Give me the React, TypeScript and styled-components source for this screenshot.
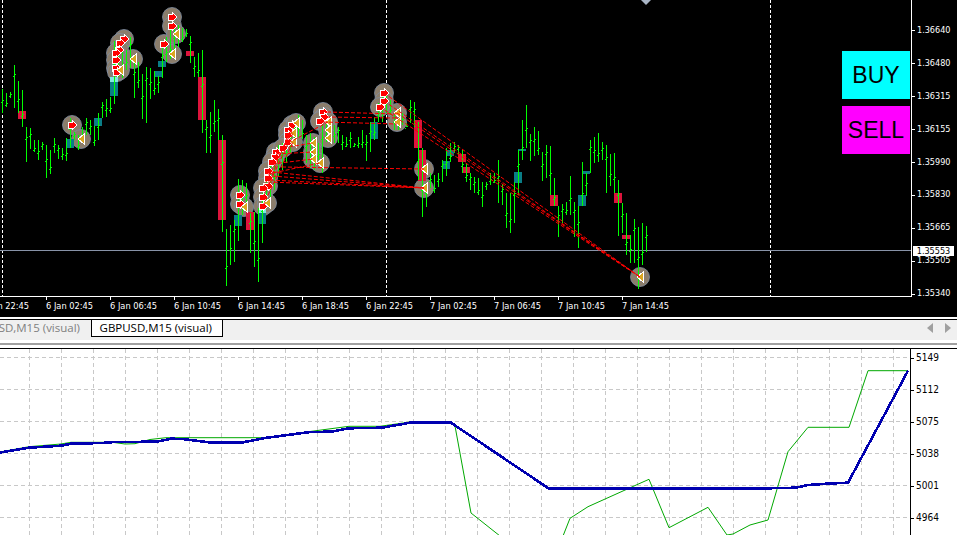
import * as React from 'react';
import styled, { createGlobalStyle } from 'styled-components';

// x = 2 + 4 * index, values are [high y, low y]
const BARS: [number, number][] = [
    [89,113],[93,107],[92,98],[65,108],[81,113],[90,127],[127,162],[128,149],[140,152],[140,160],
    [142,150],[145,178],[150,174],[138,153],[145,159],[148,160],[138,161],[118,148],[132,140],[135,150],
    [127,143],[118,135],[120,135],[126,146],[113,140],[102,118],[99,117],[97,113],[41,104],[55,77],
    [52,78],[50,70],[37,68],[58,98],[62,88],[74,119],[67,123],[68,99],[71,95],[76,93],
    [48,78],[37,62],[30,59],[28,59],[25,47],[28,42],[29,37],[36,63],[57,77],[53,77],
    [50,133],[120,153],[112,153],[100,132],[109,140],[135,232],[229,286],[225,265],[220,262],[179,241],
    [180,215],[183,210],[213,253],[212,267],[208,282],[193,243],[177,207],[163,200],[153,190],[145,177],
    [143,170],[128,163],[122,153],[123,143],[115,137],[120,139],[135,163],[133,167],[137,170],[143,160],
    [125,173],[122,142],[120,143],[125,143],[127,143],[135,150],[137,147],[132,148],[143,147],[137,148],
    [130,148],[135,161],[122,152],[117,140],[103,122],[95,122],[95,113],[100,115],[113,130],[118,130],
    [113,125],[123,127],[100,123],[102,127],[122,180],[148,217],[187,207],[173,188],[175,193],[173,187],
    [160,182],[148,176],[143,162],[142,153],[145,155],[150,173],[163,182],[173,190],[177,193],[178,195],
    [182,207],[182,190],[173,185],[173,183],[160,203],[184,205],[193,228],[193,233],[182,223],[150,195],
    [120,160],[105,148],[134,161],[127,156],[131,155],[152,181],[145,178],[146,195],[178,206],[206,237],
    [204,223],[202,215],[176,215],[202,237],[206,248],[162,206],[173,196],[140,173],[137,163],[133,162],
    [142,160],[145,193],[154,186],[153,193],[180,236],[203,233],[213,255],[235,263],[219,263],[227,289],
    [223,265],[226,252],
];

// x, top, width, height
const RED_BODIES = [
    [18,111,8,8],[186,51,8,5],[198,77,8,43],[218,140,8,80],[246,212,8,18],[414,120,8,28],[418,150,8,31],
    [458,154,8,8],[462,167,8,6],[550,195,8,11],[614,193,8,10],[622,235,8,4],
];
const TEAL_BODIES = [
    [66,139,8,9],[94,118,8,8],[110,82,8,14],[154,71,8,6],[158,61,8,6],[234,215,8,11],[258,213,8,11],
    [370,122,8,17],[442,161,8,8],[446,150,8,6],[514,172,8,11],[518,149,8,2],[578,195,8,11],[582,171,8,3],
];
const PALE_BODIES = [[110,77,8,5],[258,208,8,5]];

const ARROWS = [
    [72,125],[124,39],[120,43],[119,50],[116,53],[116,60],[116,68],[117,72],[172,17],[172,26],[164,44],
    [240,195],[240,204],[276,152],[275,157],[272,162],[268,171],[268,178],[268,186],[263,188],[263,197],[263,206],
    [292,125],[288,130],[288,135],[288,142],[283,148],[323,112],[324,117],[320,121],[384,93],[384,101],[380,107],
];
const TRIANGLES = [
    [81,139],[133,59],[120,70],[176,34],[172,54],[244,207],[267,203],[296,123],[293,133],[293,142],
    [313,143],[313,152],[313,159],[320,163],[328,122],[328,130],[328,138],[397,113],[397,122],[424,169],[424,188],[640,277],
];
const TRADE_LINES = [
    [327,112,397,114],[326,117,397,118],[323,122,397,124],
    [282,167,424,169],[272,172,424,188],[272,176,424,188],[270,180,424,188],[268,182,424,188],
    [288,143,328,122],[283,148,313,143],[276,154,313,152],[272,164,313,159],[268,174,320,163],
    [263,188,296,123],[263,197,293,133],[263,206,293,142],[268,186,288,135],
    [384,93,640,277],[384,101,640,277],[380,107,640,277],[397,113,640,277],
];

const PRICES = ['1.36640','1.36480','1.36315','1.36155','1.35990','1.35830','1.35665','1.35505','1.35340'];
const TIMES = [
    '5 Jan 22:45','6 Jan 02:45','6 Jan 06:45','6 Jan 10:45','6 Jan 14:45','6 Jan 18:45',
    '6 Jan 22:45','7 Jan 02:45','7 Jan 06:45','7 Jan 10:45','7 Jan 14:45',
];
const EQUITY_LABELS = ['5149','5112','5075','5038','5001','4964'];

const BALANCE = '0,452.5 29,447.7 61,445.7 71,443.7 102,443 114,442 157,441.7 171,438.7 182,439 212,442.7 241,442.7 265,438 310,432 331,431.7 349,428.3 382,427.7 410,422.7 451,422.7 549,488.7 748,488.7 796,487.7 808,485 830,483.5 848,482.7 908,370.7';
const EQUITY = '0,452 29,446.7 61,444 71,442.3 102,442.3 114,442.5 125,444 135,443.7 150,439.5 166,437.7 265,437.7 310,431.5 349,426.3 380,426.3 410,422 451,422.7 455,426 471,513 500,536 563,536 570,518.3 588,506.7 640,483.3 649,479.3 669,527.7 708,507.3 727,535 733,534 750,525 768,520 788,451.7 808,427.3 849,427.3 868,370.7 908,370.7';

const AXIS_FONT = `"DejaVu Sans Condensed", "DejaVu Sans", sans-serif`;

const GlobalStyle = createGlobalStyle`
    html, body {
        margin: 0;
        padding: 0;
        background: #fff;
    }
`;

const Page = styled.div`
    width: 957px;
    height: 535px;
    overflow: hidden;
    display: flex;
    flex-direction: column;
    font-family: ${AXIS_FONT};
`;

const PriceChart = styled.div`
    height: 317px;
    flex-shrink: 0;
    background: #000;
    color: #fff;
    overflow: hidden;
`;

const PlotRow = styled.div`
    position: relative;
    display: flex;
    height: 297px;
`;

const Plot = styled.div`
    position: relative;
    width: 911px;
    height: 296px;
    flex-shrink: 0;
    border-right: 1px solid #fff;
    border-bottom: 1px solid #fff;
`;

const ChartSvg = styled.svg`
    display: block;
`;

const OrderButton = styled.div<{ $bg: string; $top: number }>`
    position: absolute;
    left: 842px;
    top: ${p => p.$top}px;
    width: 68px;
    height: 48px;
    background: ${p => p.$bg};
    color: #000;
    font-family: "Liberation Sans", Arial, sans-serif;
    font-size: 23px;
    line-height: 48px;
    text-align: center;
`;

const PriceAxis = styled.div`
    flex: 1;
    padding-top: 14px;
    font-size: 9px;
`;

const AxisRow = styled.div<{ $h: number }>`
    position: relative;
    height: ${p => p.$h}px;
    line-height: ${p => p.$h}px;
    padding-left: 5px;
    white-space: nowrap;

    &::before {
        content: ' ';
        position: absolute;
        left: 0;
        top: 50%;
        width: 3px;
        height: 1px;
        background: currentColor;
    }
`;

const PriceBadge = styled.div`
    position: absolute;
    left: 913px;
    top: 246px;
    width: 41px;
    height: 10px;
    background: #fff;
    color: #000;
    font-size: 9px;
    line-height: 10px;
    text-align: center;
`;

const TimeAxis = styled.div`
    display: flex;
    margin-left: -18px;
    font-size: 9.2px;
`;

const TimeLabel = styled.div`
    position: relative;
    width: 64px;
    flex-shrink: 0;
    height: 20px;
    line-height: 18px;
    white-space: nowrap;

    &::before {
        content: ' ';
        position: absolute;
        left: 0;
        top: 0;
        width: 1px;
        height: 3px;
        background: #fff;
    }
`;

const TabStrip = styled.div`
    height: 20px;
    margin-top: 2px;
    flex-shrink: 0;
    display: flex;
    align-items: flex-start;
    background: #f0f0f0;
    border-top: 1px solid #000;
    font-family: "Open Sans", sans-serif;
    font-size: 11.5px;
`;

const Tab = styled.div<{ $active?: boolean }>`
    display: flex;
    justify-content: flex-end;
    height: 17px;
    line-height: 16px;
    white-space: nowrap;
    overflow: hidden;
    box-sizing: border-box;
    width: ${p => p.$active ? '132px' : '91px'};
    padding-right: ${p => p.$active ? '10px' : '11px'};
    background: ${p => p.$active ? '#fff' : '#f0f0f0'};
    color: ${p => p.$active ? '#000' : '#808080'};
    border-style: solid;
    border-color: #000;
    border-width: ${p => p.$active ? '0 1px 1px 1px' : '0'};
`;

const TabArrows = styled.div`
    margin-left: auto;
    display: flex;
    gap: 12px;
    padding: 3px 6px 0 0;
`;

const Separator = styled.div`
    height: 2px;
    flex-shrink: 0;
    margin-top: 3px;
    background: #a0a0a0;
`;

const EquityChart = styled.div`
    flex: 1;
    min-height: 0;
    margin-top: 3px;
    display: flex;
    background: #fff;
    border-top: 1px solid #000;
    overflow: hidden;
`;

const EquityPlot = styled.div`
    width: 910px;
    flex-shrink: 0;
    border-right: 1px solid #000;
`;

const EquityAxis = styled.div`
    flex: 1;
    margin-top: -7px;
    font-size: 10px;
    color: #000;
`;

const candleTick = (top:number, bottom:number, i:number)=>{
    return Math.round(top + (bottom - top) * (0.45 + 0.25 * Math.sin(i * 1.7)));
};

const Candles:React.FC = ()=>{
    return (
        <ChartSvg width={911} height={296} viewBox="0 0 911 296">
            <line x1="2.5" y1="0" x2="2.5" y2="296" stroke="#fff" strokeDasharray="3 2" />
            <line x1="386.5" y1="0" x2="386.5" y2="296" stroke="#fff" strokeDasharray="3 2" />
            <line x1="770.5" y1="0" x2="770.5" y2="296" stroke="#fff" strokeDasharray="3 2" />
            <line x1="0" y1="250.5" x2="911" y2="250.5" stroke="#8893a8" />
            <polygon points="641,0 651,0 646,5" fill="#a9b5c6" />

            {[...ARROWS, ...TRIANGLES].map(([x, y], i)=>(
                <circle key={`c-${i}`} cx={x} cy={y} r={9.5} fill="#8b7d6b" stroke="#7f8ea3" strokeWidth={0.8} />
            ))}

            {RED_BODIES.map(([x, y, w, h], i)=><rect key={`r-${i}`} x={x} y={y} width={w} height={h} fill="#dc143c" />)}
            {TEAL_BODIES.map(([x, y, w, h], i)=><rect key={`t-${i}`} x={x} y={y} width={w} height={h} fill="#0a7d86" />)}
            {PALE_BODIES.map(([x, y, w, h], i)=><rect key={`p-${i}`} x={x} y={y} width={w} height={h} fill="#7fe8e0" />)}

            {BARS.map(([top, bottom], i)=>{
                const x = 2 + 4 * i;
                const tick = candleTick(top, bottom, i);
                return (
                    <g key={`b-${i}`} fill="#0f0">
                        <rect x={x} y={top} width={1} height={bottom - top} />
                        <rect x={x + 1} y={tick} width={1} height={1} />
                        <rect x={x - 1} y={tick + 2} width={1} height={1} />
                    </g>
                );
            })}

            {ARROWS.map(([x, y], i)=>(
                <polygon
                    key={`a-${i}`}
                    points={`${x-4},${y-3} ${x},${y-3} ${x},${y-5} ${x+5},${y} ${x},${y+5} ${x},${y+3} ${x-4},${y+3}`}
                    fill="#f00"
                    stroke="#fff"
                    shapeRendering="crispEdges"
                />
            ))}
            {TRIANGLES.map(([x, y], i)=>(
                <polygon
                    key={`m-${i}`}
                    points={`${x+3},${y-5} ${x+3},${y+5} ${x-3},${y}`}
                    fill="#daa520"
                    stroke="#fff"
                    shapeRendering="crispEdges"
                />
            ))}

            {TRADE_LINES.map(([x1, y1, x2, y2], i)=>(
                <line key={`l-${i}`} x1={x1} y1={y1} x2={x2} y2={y2} stroke="#f00" strokeDasharray="4 2" />
            ))}
        </ChartSvg>
    );
};

const Equity:React.FC = ()=>{
    const verticals = Array.from({ length: 29 }, (_, i)=>29.5 + 32 * i);
    const horizontals = Array.from({ length: 6 }, (_, i)=>8.5 + 32 * i);

    return (
        <ChartSvg width={910} height={186} viewBox="0 349 910 186">
            <g transform="translate(0,349)" stroke="#c8c8c8" strokeDasharray="4 3">
                {verticals.map(x=><line key={x} x1={x} y1={0} x2={x} y2={186} />)}
                {horizontals.map(y=><line key={y} x1={0} y1={y} x2={910} y2={y} />)}
            </g>
            <polyline points={EQUITY} fill="none" stroke="#00a800" strokeWidth={1} />
            <polyline points={BALANCE} fill="none" stroke="#0000b0" strokeWidth={2.6} shapeRendering="crispEdges" />
        </ChartSvg>
    );
};

const App:React.FC = ()=>{
    return (
        <Page>
            <GlobalStyle />

            <PriceChart>
                <PlotRow>
                    <Plot>
                        <Candles />
                        <OrderButton $bg="#00ffff" $top={51}>BUY</OrderButton>
                        <OrderButton $bg="#ff00ff" $top={106}>SELL</OrderButton>
                    </Plot>
                    <PriceAxis>
                        {PRICES.map(p=><AxisRow key={p} $h={32.9}>{p}</AxisRow>)}
                    </PriceAxis>
                    <PriceBadge>1.35553</PriceBadge>
                </PlotRow>
                <TimeAxis>
                    {TIMES.map(t=><TimeLabel key={t}>{t}</TimeLabel>)}
                </TimeAxis>
            </PriceChart>

            <TabStrip>
                <Tab>EURUSD,M15 (visual)</Tab>
                <Tab $active>GBPUSD,M15 (visual)</Tab>
                <TabArrows>
                    <svg width="6" height="10" viewBox="0 0 6 10"><polygon points="6,0 6,10 0,5" fill="#a0a0a0" /></svg>
                    <svg width="6" height="10" viewBox="0 0 6 10"><polygon points="0,0 0,10 6,5" fill="#a0a0a0" /></svg>
                </TabArrows>
            </TabStrip>
            <Separator />

            <EquityChart>
                <EquityPlot>
                    <Equity />
                </EquityPlot>
                <EquityAxis>
                    {EQUITY_LABELS.map(l=><AxisRow key={l} $h={32}>{l}</AxisRow>)}
                </EquityAxis>
            </EquityChart>
        </Page>
    );
};

export default App;
